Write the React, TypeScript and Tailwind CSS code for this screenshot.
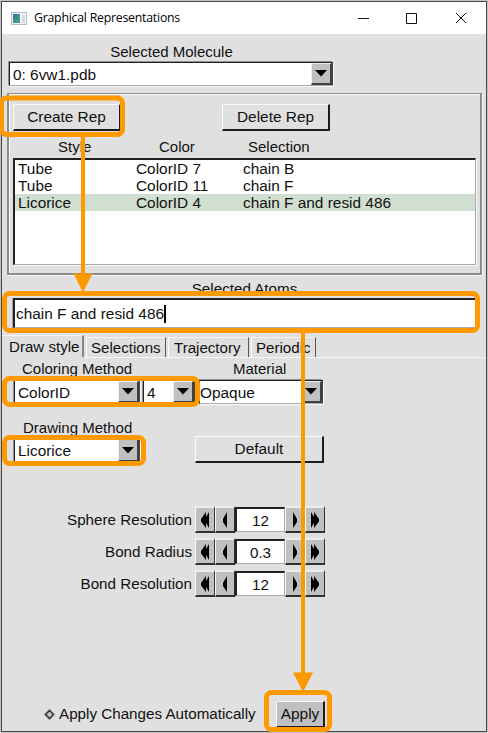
import type { ReactNode } from "react";

function DownButton() {
  return (
    <span className="flex h-full w-[21px] shrink-0 items-center justify-center border-t border-r-2 border-b-2 border-l border-t-[#f0f0f0] border-l-[#f0f0f0] border-r-[#404040] border-b-[#404040] bg-[#c0c0c0]">
      <svg width="12" height="7" viewBox="0 0 12 7">
        <path d="M0 0h12L6 6.5z" fill="#000" />
      </svg>
    </span>
  );
}

function Combo({ className, children }: { className: string; children: ReactNode }) {
  return (
    <div
      className={`flex shrink-0 border-t border-r border-b border-l border-t-[#222] border-r-[#444] border-b-[#aaa] border-l-[#222] bg-white shadow-[1px_1px_0_#f8f8f8,-1px_-1px_0_#909090] ${className}`}
    >
      <span className="flex-1 leading-[23px]">{children}</span>
      <DownButton />
    </div>
  );
}

function Button({ className, children }: { className: string; children: ReactNode }) {
  return (
    <button
      className={`flex shrink-0 items-center justify-center border-t border-r-2 border-b-2 border-l border-t-[#fafafa] border-r-[#1c1c1c] border-b-[#1c1c1c] border-l-[#fafafa] whitespace-nowrap ${className}`}
    >
      {children}
    </button>
  );
}

function StepButton({ double, flip }: { double?: boolean; flip?: boolean }) {
  return (
    <span className="flex h-[27px] w-5 shrink-0 items-center justify-center border-t-2 border-r border-b-2 border-l border-t-[#ededed] border-r-[#303030] border-b-[#303030] border-l-[#f8f8f8] bg-[#c0c0c0]">
      <svg width="12" height="16" viewBox="0 0 12 16" className={flip ? "-scale-x-100" : ""}>
        {double ? (
          <path d="M2 0v16l3-5v5l5-6.500V7L5 0v5z" fill="#000" />
        ) : (
          <path d="M4 0v16l4-6V7z" fill="#000" />
        )}
      </svg>
    </span>
  );
}

function Spinner({ label, value }: { label: string; value: string }) {
  return (
    <div className="mb-[5px] flex h-[27px] items-center">
      <span className="mr-[3px] w-[190px] text-right leading-[26px] whitespace-nowrap">{label}</span>
      <StepButton double flip />
      <StepButton flip />
      <span className="h-[25px] w-[50px] border-t-2 border-r border-b border-l-2 border-t-[#222] border-r-[#aaa] border-b-[#aaa] border-l-[#222] bg-white text-center leading-[23px]">
        {value}
      </span>
      <StepButton />
      <StepButton double />
    </div>
  );
}

const reps = [
  ["Tube", "ColorID 7", "chain B"],
  ["Tube", "ColorID 11", "chain F"],
  ["Licorice", "ColorID 4", "chain F and resid 486"],
];

function Annotations() {
  return (
    <svg className="pointer-events-none absolute inset-0" width="488" height="733" viewBox="0 0 488 733">
      <g fill="none" stroke="#ff9900" strokeWidth="5">
        <rect x="1.500" y="98" width="121" height="36.500" rx="5" />
        <rect x="4.500" y="293.500" width="473" height="37" rx="5" />
        <rect x="4.500" y="378.500" width="193" height="26" rx="5" />
        <rect x="4.500" y="437.500" width="139" height="26" rx="5" />
        <rect x="266.500" y="692.500" width="63" height="37" rx="5" />
        <path d="M83 136v142M303 332v342" strokeWidth="4" />
      </g>
      <path d="M73.500 273.500h19L83 292.500zM293 672.500h20L303 692z" fill="#ff9900" />
    </svg>
  );
}

export default function App() {
  return (
    <div className="relative flex h-[733px] w-[488px] flex-col overflow-hidden bg-[#c4c4c4] pt-px pl-px font-['Liberation_Sans',Arial,sans-serif] text-[15.4px] leading-[18px] text-[#111]">
      <div className="flex h-[731px] w-[486px] flex-col border border-[#454a47] bg-[#e0e0e0]">
        <header className="flex h-8 shrink-0 items-center bg-white pl-[9px]">
          <svg width="16" height="13" viewBox="0 0 16 13" className="mr-[7px]">
            <defs>
              <linearGradient id="pane" x1="0" y1="0" x2="1" y2="1">
                <stop offset="0" stopColor="#3973a5" />
                <stop offset="1" stopColor="#4ba77a" />
              </linearGradient>
            </defs>
            <rect x=".5" y=".5" width="15" height="12" fill="#f1f3f4" stroke="#b5bdc2" />
            <rect x="2" y="2" width="7" height="9" fill="url(#pane)" />
            <path d="M11 3h3v8h-3z" fill="#d2d8dc" />
          </svg>
          <span className="w-[283px] font-['Open_Sans','Noto_Sans',sans-serif] text-[12.3px] tracking-[-0.23px] whitespace-nowrap text-black">
            Graphical Representations
          </span>
          <svg width="112" height="14" viewBox="0 0 112 14" className="ml-[41px]" fill="none" stroke="#111">
            <path d="M0 7.500h11M98 2l10 10M108 2L98 12" />
            <path d="M48.500 2.500h10v10h-10z" />
          </svg>
        </header>

        <div className="mt-[9px] h-[19px] w-[336px] pl-[3px] text-center text-[15px]">Selected Molecule</div>
        <Combo className="ml-[7px] h-[24px] w-[324px] pl-[3px]">0: 6vw1.pdb</Combo>

        <section className="mt-[7px] ml-[5px] flex h-[182px] w-[475px] flex-col border-2 border-t border-[#8c8c8c] pt-[10px] pl-1 shadow-[inset_1px_1px_0_#fafafa,1px_1px_0_#fafafa]">
          <div className="flex gap-[101px]">
            <Button className="h-[27px] w-[108px]">Create Rep</Button>
            <Button className="h-[27px] w-[108px]">Delete Rep</Button>
          </div>
          <div className="mt-[7px] grid h-[20px] grid-cols-[101px_89px_1fr] pl-[45px] text-[15px]">
            <span>Style</span>
            <span>Color</span>
            <span>Selection</span>
          </div>
          <div className="h-[107px] w-[463px] border-t-2 border-r border-b border-l-2 border-t-[#222] border-r-[#aaa] border-b-[#aaa] border-l-[#222] bg-white shadow-[1px_1px_0_#f8f8f8]">
            {reps.map(([style, color, selection], i) => (
              <div
                key={i}
                className={`grid h-[17px] grid-cols-[118px_107px_1fr] pl-[3px] leading-[17px] ${i === 2 ? "bg-[#d1dfd1]" : ""}`}
              >
                <span>{style}</span>
                <span>{color}</span>
                <span>{selection}</span>
              </div>
            ))}
          </div>
        </section>

        <div className="mt-[5px] h-[18px] w-[485px] text-center text-[15.2px]">Selected Atoms</div>
        <div className="ml-[11px] flex h-[30px] w-[463px] shrink-0 items-center border-t-2 border-r border-b border-l-2 border-t-[#222] border-r-[#aaa] border-b-[#aaa] border-l-[#222] bg-white pl-px shadow-[-1px_0_0_#a0a0a0]">
          chain F and resid 486
          <span className="h-[18px] w-[2px] bg-black" />
        </div>

        <nav className="mt-[7px] flex h-[22px] shrink-0 items-end gap-[2px] text-[15.100px] whitespace-nowrap">
          <span className="h-[22px] w-[82px] border-t border-r-2 border-t-[#f5f5f5] border-r-[#888] pl-[7px] leading-[21px]">Draw style</span>
          <span className="h-[20px] w-[80px] border-t border-r border-l border-t-[#f5f5f5] border-r-[#555] border-l-[#fff] pl-1 leading-[20px]">Selections</span>
          <span className="h-[20px] w-[81px] border-t border-r border-l border-t-[#f5f5f5] border-r-[#555] border-l-[#fff] pl-[5px] leading-[20px]">Trajectory</span>
          <span className="h-[20px] w-[65px] border-t border-r border-l border-t-[#f5f5f5] border-r-[#555] border-l-[#fff] pl-1 leading-[20px]">Periodic</span>
        </nav>
        <div className="ml-[82px] h-px bg-[#f6f6f6]" />

        <div className="mt-[2px] flex h-[20px] shrink-0 pl-5 text-[15px]">
          <span className="w-[211px]">Coloring Method</span>
          <span>Material</span>
        </div>
        <div className="flex h-[25px] shrink-0 pl-[12px]">
          <Combo className="h-[24px] w-[126px] pl-[3px]">ColorID</Combo>
          <Combo className="ml-[3px] h-[24px] w-[52px] pl-[3px]">4</Combo>
          <Combo className="ml-[4px] h-[24px] w-[124px]">Opaque</Combo>
        </div>

        <div className="mt-[14px] h-[17px] shrink-0 pl-[21px] text-[15px]">Drawing Method</div>
        <div className="flex h-[27px] shrink-0 items-end pl-[12px]">
          <Combo className="h-[25px] w-[126px] pl-[3px]">Licorice</Combo>
          <Button className="ml-[55px] h-[27px] w-[129px]">Default</Button>
        </div>

        <div className="mt-[43px] shrink-0 text-[15.2px]">
          <Spinner label="Sphere Resolution" value="12" />
          <Spinner label="Bond Radius" value="0.3" />
          <Spinner label="Bond Resolution" value="12" />
        </div>

        <footer className="mt-auto mb-[3px] flex h-[28px] shrink-0 items-center pl-[41px]">
          <svg width="13" height="13" viewBox="0 0 13 13" className="mr-[3px]">
            <path d="M1 6.500L6.500 1L12 6.500L6.500 12z" fill="#f5f5f5" stroke="#aaa" />
            <path d="M2.500 6.500L6.500 2.500L10.500 6.500L6.500 10.500z" fill="#c5c5c5" stroke="#222" strokeWidth="1.300" />
          </svg>
          <span className="w-[217px] text-[15.200px]">Apply Changes Automatically</span>
          <Button className="h-[27px] w-[49px] bg-[#c0c0c0]">Apply</Button>
        </footer>
      </div>
      <Annotations />
    </div>
  );
}
